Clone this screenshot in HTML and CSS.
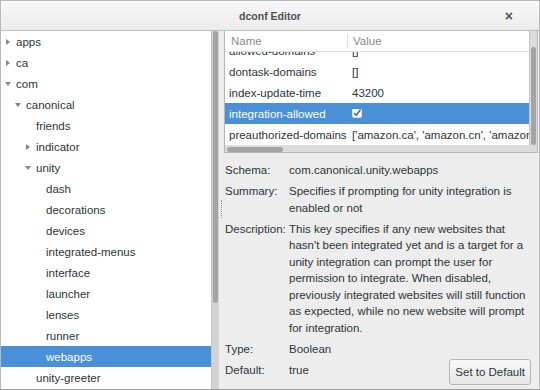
FILE: index.html
```html
<!DOCTYPE html>
<html lang="en">
<head>
    <meta charset="UTF-8">
    <title>dconf Editor</title>
    <link rel="stylesheet" href="styles.css">
</head>
<body>
    <div class="window">
        <div class="titlebar">
            <span class="title">dconf Editor</span>
            <span class="close">&#215;</span>
        </div>
        <div class="main">
            <div class="sidebar">
                <div class="tree">
                    <div class="node l0"><span class="exp"><i class="arr-right"></i></span>apps</div>
                    <div class="node l0"><span class="exp"><i class="arr-right"></i></span>ca</div>
                    <div class="node l0"><span class="exp"><i class="arr-down"></i></span>com</div>
                    <div class="node l1"><span class="exp"><i class="arr-down"></i></span>canonical</div>
                    <div class="node l2"><span class="exp"></span>friends</div>
                    <div class="node l2"><span class="exp"><i class="arr-right"></i></span>indicator</div>
                    <div class="node l2"><span class="exp"><i class="arr-down"></i></span>unity</div>
                    <div class="node l3"><span class="exp"></span>dash</div>
                    <div class="node l3"><span class="exp"></span>decorations</div>
                    <div class="node l3"><span class="exp"></span>devices</div>
                    <div class="node l3"><span class="exp"></span>integrated-menus</div>
                    <div class="node l3"><span class="exp"></span>interface</div>
                    <div class="node l3"><span class="exp"></span>launcher</div>
                    <div class="node l3"><span class="exp"></span>lenses</div>
                    <div class="node l3"><span class="exp"></span>runner</div>
                    <div class="node l3 selected"><span class="exp"></span>webapps</div>
                    <div class="node l2"><span class="exp"></span>unity-greeter</div>
                </div>
                <div class="vscroll tree-scroll"><div class="thumb"></div></div>
            </div>
            <div class="handle"><span class="dots"></span></div>
            <div class="content">
                <div class="frame">
                    <div class="frame-top">
                        <div class="keys">
                            <div class="keys-head">
                                <div class="col-name">Name</div>
                                <div class="col-value">Value</div>
                            </div>
                            <div class="keys-body">
                                <div class="keys-rows">
                                    <div class="key"><div class="col-name">allowed-domains</div><div class="col-value">[]</div></div>
                                    <div class="key"><div class="col-name">dontask-domains</div><div class="col-value">[]</div></div>
                                    <div class="key"><div class="col-name">index-update-time</div><div class="col-value">43200</div></div>
                                    <div class="key selected">
                                        <div class="col-name">integration-allowed</div>
                                        <div class="col-value">
                                            <svg class="check" width="10" height="10" viewBox="0 0 10 10">
                                                <rect x="0.5" y="0.5" width="9" height="9" rx="1.5" fill="#fff" stroke="#d8e4f2"/>
                                                <path d="M2 5 L4.2 7.2 L8.6 1.6" fill="none" stroke="#4a6f98" stroke-width="1.6"/>
                                            </svg>
                                        </div>
                                    </div>
                                    <div class="key"><div class="col-name">preauthorized-domains</div><div class="col-value">['amazon.ca', 'amazon.cn', 'amazon.com', 'amazon.co.uk']</div></div>
                                </div>
                            </div>
                        </div>
                        <div class="vscroll keys-scroll"><div class="thumb"></div></div>
                    </div>
                    <div class="hscroll"><div class="thumb"></div></div>
                </div>

                <div class="details">
                    <div class="prop"><div class="label">Schema:</div><div class="value">com.canonical.unity.webapps</div></div>
                    <div class="prop"><div class="label">Summary:</div><div class="value">Specifies if prompting for unity integration is enabled or not</div></div>
                    <div class="prop"><div class="label">Description:</div><div class="value">This key specifies if any new websites that hasn't been integrated yet and is a target for a unity integration can prompt the user for permission to integrate. When disabled, previously integrated websites will still function as expected, while no new website will prompt for integration.</div></div>
                    <div class="prop"><div class="label">Type:</div><div class="value">Boolean</div></div>
                    <div class="prop"><div class="label">Default:</div><div class="value">true</div><button class="btn">Set to Default</button></div>
                </div>
            </div>
        </div>
    </div>
</body>
</html>
```

FILE: styles.css
```css
* { box-sizing: border-box; }
body { margin: 0; width: 540px; height: 390px; overflow: hidden; font-family: "Liberation Sans", Arial, sans-serif; font-size: 11.5px; color: #2e3436; background: #ededed; }

.window { width: 540px; height: 390px; border: 1px solid #b9b9b9; border-bottom-color: #9c9c9c; display: flex; flex-direction: column; background: #ededed; }

.titlebar { height: 30px; flex: none; display: flex; align-items: center; justify-content: center; position: relative; background: linear-gradient(#f8f8f8, #ececec); border-bottom: 1px solid #bfbfbf; }
.title { font-weight: bold; font-size: 10.5px; color: #505050; margin-top: 1px; }
.close { position: absolute; right: 26px; top: 7px; font-size: 14px; color: #555; font-weight: bold; }

.main { flex: 1; display: flex; min-height: 0; }

.sidebar { width: 218px; flex: none; display: flex; background: #fff; border-right: 1px solid #b3b3b3; }
.tree { width: 210px; flex: none; overflow: hidden; }
.node { height: 21px; display: flex; align-items: center; white-space: nowrap; }
.node.l0 { padding-left: 4px; }
.node.l1 { padding-left: 14px; }
.node.l2 { padding-left: 24px; }
.node.l3 { padding-left: 34px; }
.node.selected { background: #4a90d9; color: #fff; }
.exp { width: 11px; flex: none; display: flex; align-items: center; padding-left: 1px; }
.arr-right { display: block; width: 0; height: 0; border-left: 4px solid #858585; border-top: 3.5px solid transparent; border-bottom: 3.5px solid transparent; }
.arr-down { display: block; width: 0; height: 0; border-top: 4px solid #858585; border-left: 3.5px solid transparent; border-right: 3.5px solid transparent; margin-left: -1px; }

.vscroll { width: 8px; flex: none; background: #d3d3d3; border-left: 1px solid #c4c4c4; padding: 0 1px; }
.vscroll .thumb { background: #a4a4a4; border-radius: 3px; }
.tree-scroll .thumb { height: 272px; }
.keys-scroll { background: #dcdcdc; }
.keys-scroll .thumb { margin-top: 16px; height: 98px; }

.handle { width: 5px; flex: none; display: flex; align-items: center; justify-content: center; }
.dots { width: 0; height: 18px; border-left: 1px dotted #8a8a8a; margin-top: -3px; }

.content { flex: 1; min-width: 0; display: flex; flex-direction: column; padding-right: 1px; }

.frame { background: #fff; border: 1px solid #b6b6b6; border-top: none; display: flex; flex-direction: column; }
.frame-top { display: flex; }
.keys { flex: 1; min-width: 0; }
.keys-head { height: 21px; display: flex; align-items: center; border-bottom: 1px solid #e2e2e2; color: #8b8b8b; }
.keys-head .col-name { padding-left: 6px; border-right: 1px solid #e0e0e0; height: 14px; line-height: 14px; }
.keys-head .col-value { padding-left: 5px; }
.col-name { width: 123px; flex: none; padding-left: 4px; white-space: nowrap; }
.col-value { flex: 1; padding-left: 4px; white-space: nowrap; overflow: hidden; }
.keys-body { height: 93px; overflow: hidden; }
.keys-rows { margin-top: -12px; }
.key { height: 21px; display: flex; align-items: center; }
.key.selected { background: #4a90d9; color: #fff; }
.check { display: block; margin-top: -1px; }

.hscroll { height: 7px; background: #dcdcdc; padding: 2px 0 0 2px; }
.hscroll .thumb { width: 56px; height: 5px; background: #a4a4a4; border-radius: 3px; }

.details { padding: 9px 2px 0 1px; display: flex; flex-direction: column; gap: 4.5px; line-height: 16.5px; }
.prop { display: flex; align-items: flex-start; }
.label { width: 64px; flex: none; }
.value { flex: 1; max-width: 243px; }
.btn { margin: -3px 5px 0 auto; height: 26px; padding: 0 5px; font-family: "Liberation Sans", Arial, sans-serif; font-size: 11.5px; color: #2e3436; background: linear-gradient(#f8f8f8, #e6e6e6); border: 1px solid #b5b5b5; border-radius: 3px; }
.prop .value + .btn { flex: none; }
```
